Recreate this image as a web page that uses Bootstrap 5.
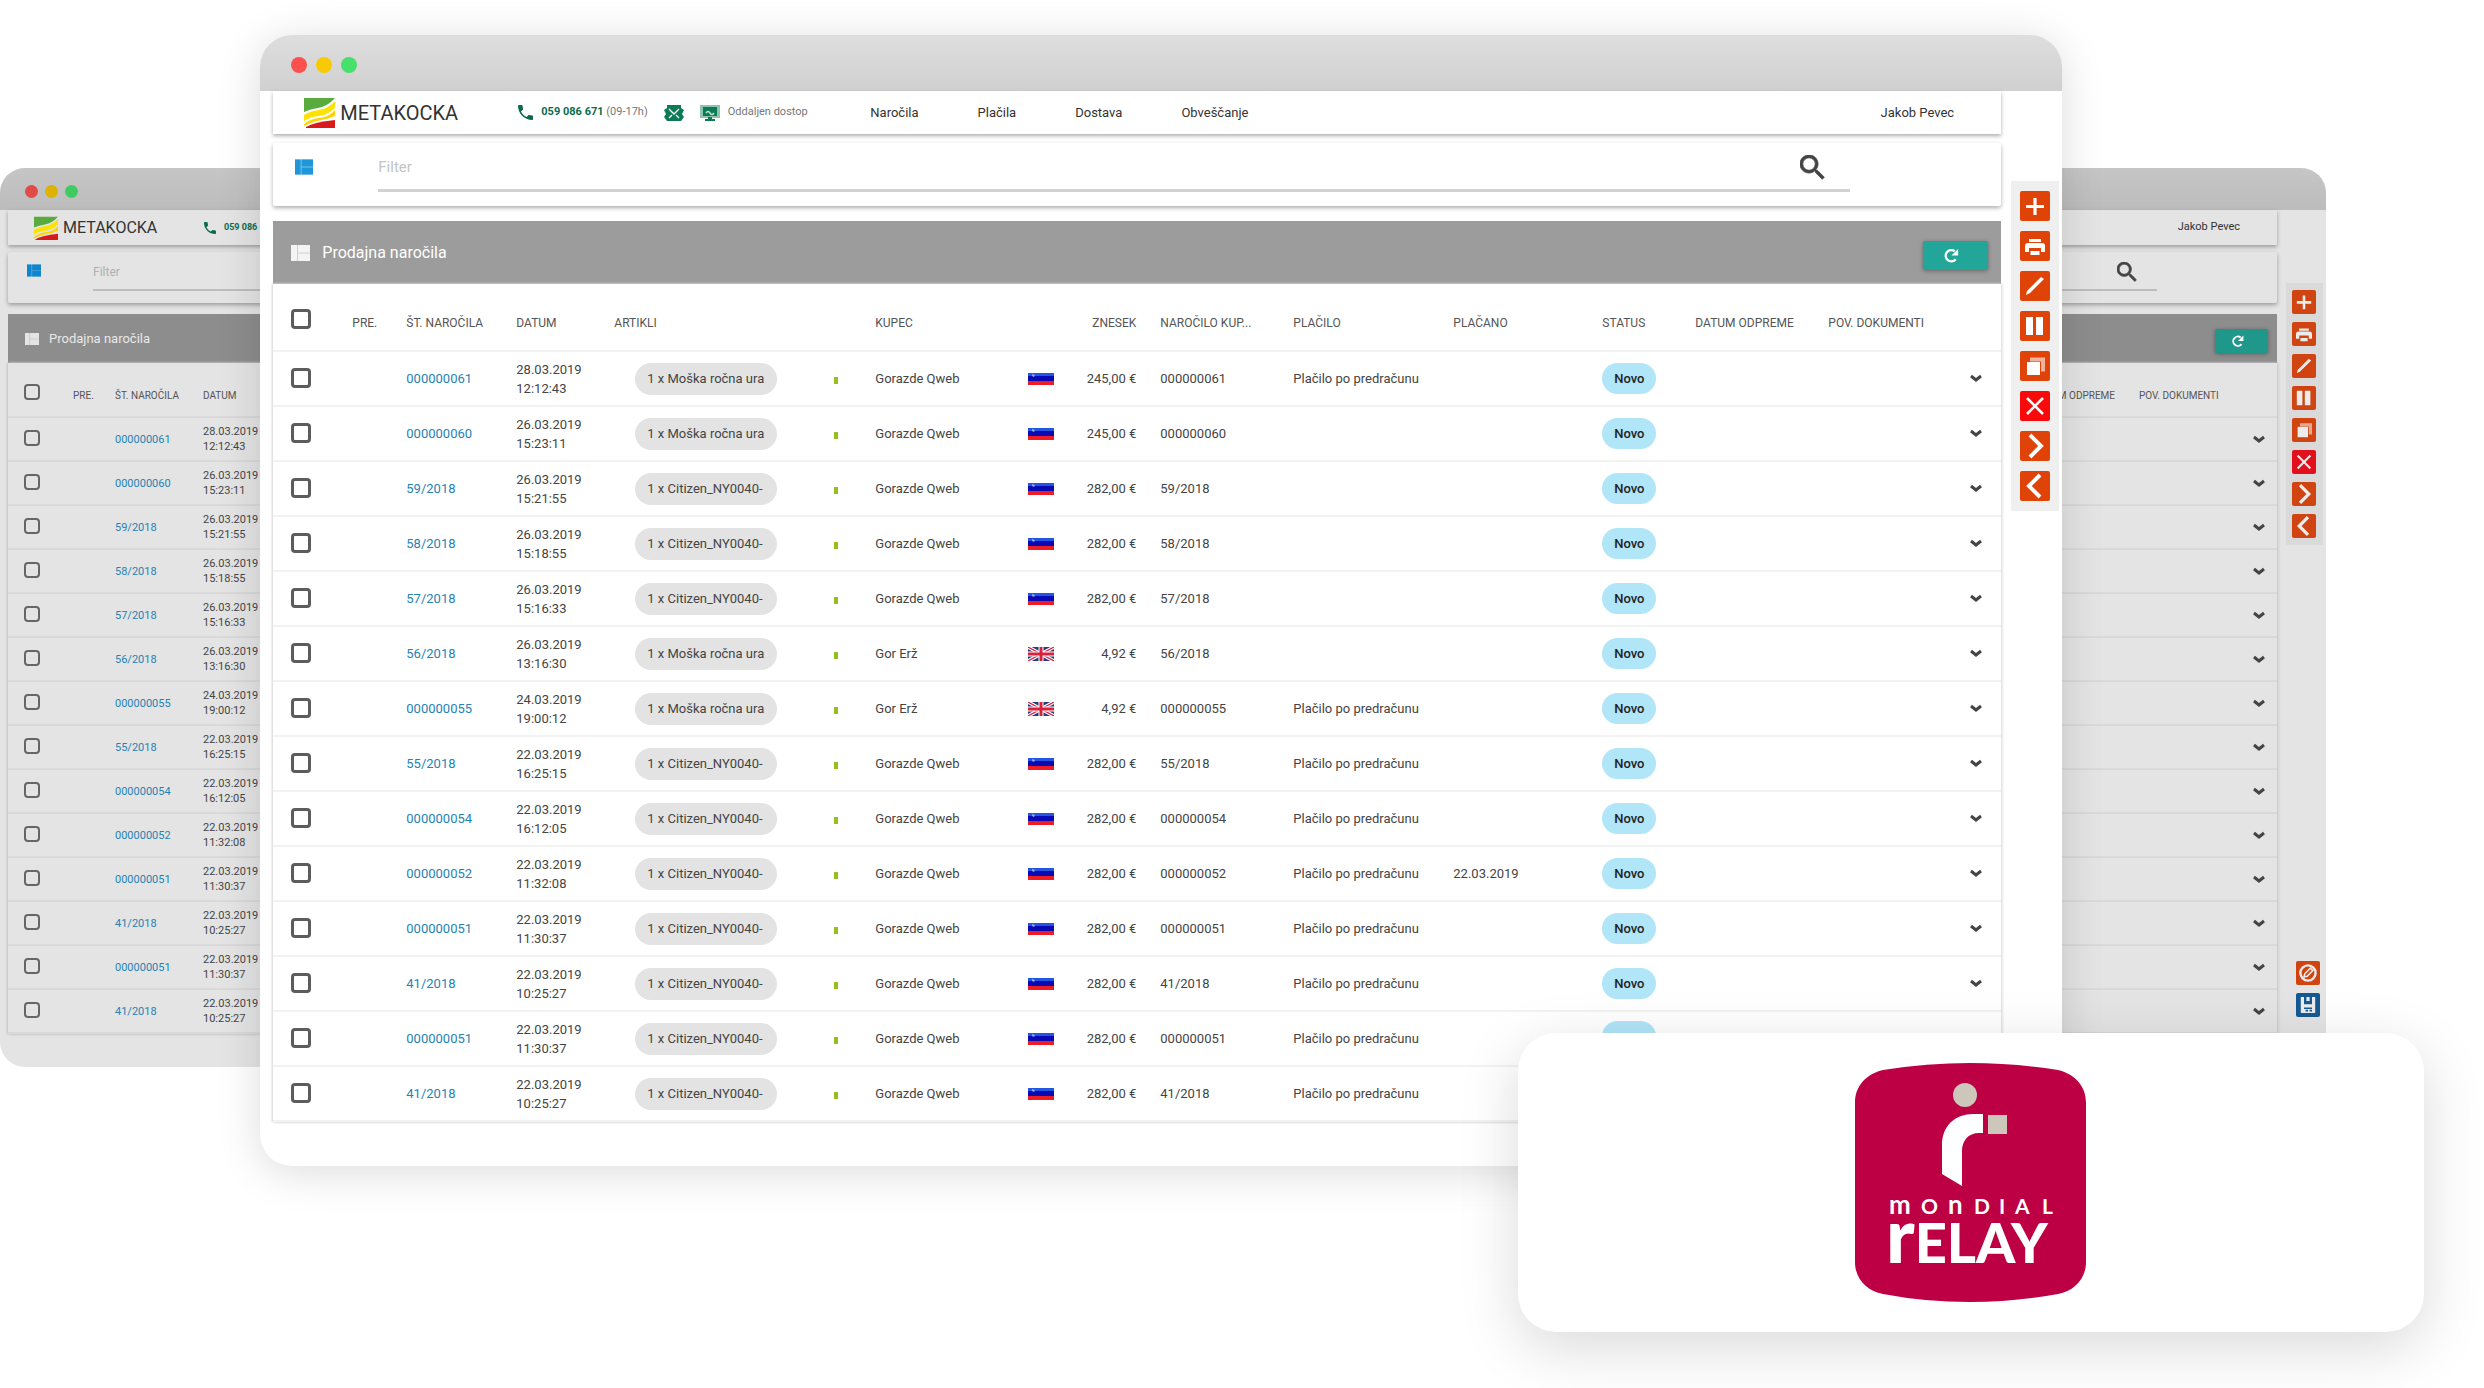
<!DOCTYPE html>
<html lang="sl">
<head>
<meta charset="utf-8">
<meta name="viewport" content="width=device-width, initial-scale=1">
<title>Metakocka – Prodajna naročila</title>
<link href="https://cdn.jsdelivr.net/npm/bootstrap@5.3.0/dist/css/bootstrap.min.css" rel="stylesheet">
<style>
body{font-family:Roboto,"Liberation Sans",sans-serif;background:#fff;color:#333}
.stage{overflow:hidden}
a{text-decoration:none}
svg{display:block;flex:none}
/* windows */
.win{--paper:#fff;--edge:#d6d6d6;--line:#f2f2f2;--head:#9c9c9c;--fs:13px;--fs-h:12px;position:absolute;background:var(--paper);border-radius:32px;overflow:hidden;font-size:var(--fs)}
.win-front{left:10.48%;width:72.54%;top:35px;box-shadow:0 6px 44px rgba(0,0,0,.14)}
.win-back{--paper:#e4e4e4;--edge:#c4c4c4;--line:#d9d9d9;--head:#8d8d8d;--fs:11px;--fs-h:10px;left:0;width:93.64%;top:168px;border-radius:25px}
.titlebar{height:56px;background:linear-gradient(#dedede,#d0d0d0);padding:3px 0 0 31px;gap:9px}
.win-back .titlebar{height:42px;background:linear-gradient(#c6c6c6,#bcbcbc);padding:5px 0 0 25px;gap:7px}
.dot{width:16px;height:16px;border-radius:50%}
.win-back .dot{width:13px;height:13px}
.dot-r{background:#fa514f}.dot-y{background:#f8c905}.dot-g{background:#47e06c}
.win-back .dot-r{background:#e04a47}.win-back .dot-y{background:#dcb203}.win-back .dot-g{background:#40cb62}
.pane{min-width:0;padding:0 0 44px 13px}
.win-back .pane{padding:0 0 33px 8px}
.sheet{background:var(--paper);box-shadow:0 2px 4px rgba(0,0,0,.32)}
/* top bar */
.topbar{height:43px;padding-left:31px}
.win-back .topbar{height:35px;padding-left:26px}
.brand{width:214px;gap:5px;font-size:20px;color:#333}
.win-back .brand{width:170px;font-size:16px}
.contact{width:352px;font-size:11px;color:#777}
.win-back .contact{font-size:9px}
.phone{color:#0b6b4c}
.topnav{gap:59px}
.topnav a,.user{color:#333}
.user{margin-right:47px}
.win-back .user{margin-right:37px}
/* filter */
.filter{height:63px;margin-top:9px;padding:0 151px 0 22px;gap:65px;border-radius:2px}
.win-back .filter{height:51px;margin-top:7px;padding:0 120px 0 19px;gap:52px}
.filter-ico{margin-top:16px}
.win-back .filter-ico{margin-top:12px}
.filter-line{height:49px;padding-top:2px;border-bottom:3px solid #d2d2d2;padding-right:25px}
.win-back .filter-line{height:39px;border-bottom:2px solid #bdbdbd;padding-right:20px}
.filter-line input{border:0;background:none;padding:0;outline:0;font-size:15px;min-width:0}
.win-back .filter-line input{font-size:12px}
.filter-line input::placeholder{color:#c4c4c4;opacity:1}
.win-back .filter-line input::placeholder{color:#b0b0b0}
.plain{border:0;background:none;padding:0;color:#444}
/* heading */
.heading{height:63px;margin-top:15px;padding:0 13px 0 18px;background:var(--head)}
.win-back .heading{height:49px;margin-top:11px;padding:0 9px 0 17px}
.heading h1{font-size:16px;font-weight:400;color:#fff;margin:0 0 0 12px}
.win-back .heading h1{font-size:13px;color:#e8e8e8;margin-left:10px}
.refresh{width:65px;height:29px;border:0;border-radius:2px;background:#22a699;color:#fff;padding:0 8px 0 0;box-shadow:0 1px 4px rgba(0,0,0,.35);margin-top:5px}
.win-back .refresh{width:53px;height:24px;background:#20978b;padding-right:7px}
/* table */
.orders{table-layout:fixed;width:100%;box-shadow:-1px 0 2px var(--edge),1px 0 3px var(--edge)}
.orders th{height:67px;padding:12px 0 0;font-size:var(--fs-h);font-weight:400;color:#555;vertical-align:middle;white-space:nowrap;border-bottom:2px solid var(--line)}
.orders td{height:55px;padding:0;vertical-align:middle;line-height:19px;white-space:nowrap;border-bottom:2px solid var(--line);color:#444}
.win-back .orders th{height:54px;padding-top:11px}
.win-back .orders td{height:44px;line-height:15px}
.orders .cb{padding:0 0 2px 18px}
.orders th.cb{padding-top:6px}
.win-back .orders .cb{padding-left:16px}
.cb input{appearance:none;display:block;width:20px;height:20px;border:3px solid #5c5c5c;border-radius:4px;margin:0}
.win-back .cb input{width:16px;height:16px;border-width:2px;border-color:#666}
.orders .num a{color:#2583b3}
.orders .ref{padding-left:24px}
.item{display:inline-flex;align-items:center;width:142px;height:32px;margin-left:21px;padding-left:12px;border-radius:16px;background:#e3e3e3;overflow:hidden}
.stock{display:block;width:4px;height:7px;margin:4px 0 0 13px;background:#93c01f}
.state{display:inline-flex;align-items:center;justify-content:center;width:54px;height:31px;border-radius:16px;background:#b1e5f8;color:#222;font-weight:500}
/* side tools */
.side{flex:none;width:61px}
.win-back .side{width:49px}
.tools{margin:90px 0 0 10px;padding:10px 9px;gap:10px;width:48px;background:#efefef}
.win-back .tools{margin:73px 0 0 9px;padding:7px 6px;gap:8px;width:37px;background:#dadada}
.tool{width:30px;height:30px;padding:0;border:0;border-radius:2px;background:#e04307;color:#fff}
.win-back .tool{width:24px;height:24px;background:#cf4410;color:#ececec}
.tool-del{background:#f80a0a}
.win-back .tool-del{background:#e0101c}
.win-back .tool-save{background:#165a94}
.extra{margin:auto 0 50px 19px;gap:8px}
/* carrier card */
.carrier{position:absolute;left:61.1%;width:36.48%;top:1033px;padding:30px 0;border-radius:38px;background:#fff;box-shadow:0 16px 60px rgba(0,0,0,.15)}
.carrier text{font-family:Lato,sans-serif;fill:#fff}
</style>
</head>
<body>
<svg width="0" height="0" class="position-absolute" aria-hidden="true">
  <symbol id="logo" viewBox="0 0 31 31"><path d="M0 1h31Q24 9 14 11 6 12 0 15z" fill="#58ab3c"/><path d="M0 18Q6 14 15 13 25 11 31 4v7Q24 18 14 19 6 20 0 24z" fill="#fbe200"/><path d="M0 27Q6 22 15 21 25 20 31 13v6Q22 23 13 24 6 26 0 29z" fill="#fbd500"/><path d="M2 30Q10 25 31 23v8H2z" fill="#d81a1a"/></symbol>
  <symbol id="phone" viewBox="3 3 18 18"><path fill="currentColor" d="M6.6 10.8c1.4 2.800 3.800 5.100 6.600 6.600l2.200-2.200c.3-.3.700-.4 1-.2 1.100.4 2.300.6 3.600.6.600 0 1 .4 1 1V20c0 .6-.4 1-1 1C10.600 21 3 13.400 3 4c0-.6.400-1 1-1h3.500c.6 0 1 .4 1 1 0 1.300.2 2.500.6 3.600.1.300 0 .7-.2 1z"/></symbol>
  <symbol id="mail" viewBox="0 0 20 16"><path fill="#0b7a55" d="M3 0h14v3l3 2-2 4 2 3-3 4H3l-3-4 2-3-2-4 3-2z"/><path d="M5 4l5 5 5-5M5 13l3-3M15 13l-3-3" fill="none" stroke="#fff" stroke-width="1.400"/></symbol>
  <symbol id="remote" viewBox="0 0 20 18"><path fill="#8cc5ad" d="M0 1h20v13H0z"/><path fill="#0b7a55" d="M3 3h14v9H3z"/><path fill="#0b7a55" d="M8 13h4v2h3v2H5v-2h3z"/><path d="M6 9q2-3 4 0t4 0" stroke="#bfe3d5" stroke-width="1.500" fill="none"/></symbol>
  <symbol id="grid" viewBox="0 0 19 16"><path fill="currentColor" d="M0 0h6v16H0zM7 0h12v7.500H7zM7 8.500h12V16H7z"/><path fill="currentColor" opacity=".6" d="M0 0h19v16H0z"/></symbol>
  <symbol id="search" viewBox="3 3 18 18"><path fill="currentColor" stroke="currentColor" stroke-width=".6" d="M15.500 14h-.8l-.3-.3A6.500 6.500 0 1 0 13.700 14.400l.3.300v.8l5 5 1.500-1.500zm-6 0a4.500 4.500 0 1 1 0-9 4.500 4.500 0 0 1 0 9z"/></symbol>
  <symbol id="reload" viewBox="0 0 18 18"><path d="M13.500 13A6 6 0 1 1 12.500 4.500" fill="none" stroke="currentColor" stroke-width="2.400"/><path fill="currentColor" d="M16 2v7H9z"/></symbol>
  <symbol id="chev" viewBox="0 0 14 9"><path d="M2 2l5 4 5-4" fill="none" stroke="#444" stroke-width="3"/></symbol>
  <symbol id="plus" viewBox="0 0 30 30"><path d="M15 7v17M6 15.500h18" stroke="currentColor" stroke-width="3.200"/></symbol>
  <symbol id="print" viewBox="0 0 30 30"><path fill="currentColor" d="M9 8h12v3H9zM8 12h14q3 0 3 3v6h-4v-4H9v4H5v-6q0-3 3-3zM10.500 20h9v4h-9z"/></symbol>
  <symbol id="pen" viewBox="0 0 30 30"><path fill="currentColor" d="M6 24l1-4L21 6l3 2-14 14z"/></symbol>
  <symbol id="cols" viewBox="0 0 30 30"><path fill="currentColor" d="M6 6h7v18H6zM16 6h7v18h-7z"/></symbol>
  <symbol id="copy" viewBox="0 0 30 30"><path fill="currentColor" d="M7 11h13v13H7z"/><path d="M10 8.500h13v12" fill="none" stroke="currentColor" stroke-width="4" opacity=".6"/></symbol>
  <symbol id="cross" viewBox="0 0 30 30"><path d="M7 7l16 16M23 7L7 23" stroke="currentColor" stroke-width="2.600"/></symbol>
  <symbol id="next" viewBox="0 0 30 30"><path d="M10 4l11 11-11 11" fill="none" stroke="currentColor" stroke-width="4"/></symbol>
  <symbol id="prev" viewBox="0 0 30 30"><path d="M20 4L9 15l11 11" fill="none" stroke="currentColor" stroke-width="4"/></symbol>
  <symbol id="edit" viewBox="0 0 30 30"><circle cx="15" cy="15" r="9.500" fill="none" stroke="currentColor" stroke-width="3"/><path d="M10 20l1-4 7-7 3 3-7 7z" fill="none" stroke="currentColor" stroke-width="2"/></symbol>
  <symbol id="save" viewBox="0 0 30 30"><path fill="currentColor" d="M6 5h4v9h10V5h4v20H6z"/><path fill="currentColor" d="M13 5h4v5h-4z"/><path d="M10 19h10M12 22h3M17 22h3" stroke="#165a94" stroke-width="2"/></symbol>
  <symbol id="si" viewBox="0 0 26 12"><path fill="#2355e0" d="M0 0h26v4H0z"/><path fill="#0a0ab4" d="M0 3h26v5H0z"/><path fill="#ee1c25" d="M0 8h26v4H0z"/><path fill="#8fa6ee" d="M4 1l3 1-1 2-2-1z"/></symbol>
  <symbol id="gb" viewBox="0 0 26 14"><path fill="#283a80" d="M0 0h26v14H0z"/><path d="M0 0l26 14M26 0L0 14" stroke="#fff" stroke-width="3.500"/><path d="M0 0l26 14M26 0L0 14" stroke="#d8213b" stroke-width="1.200"/><path d="M13 0v14M0 7h26" stroke="#fff" stroke-width="5"/><path d="M13 0v14M0 7h26" stroke="#d8213b" stroke-width="3"/></symbol>
</svg>

<main class="stage position-relative min-vh-100">

  <section class="win win-back" aria-label="Okno v ozadju">
    <div class="titlebar d-flex align-items-center"><span class="dot dot-r"></span><span class="dot dot-y"></span><span class="dot dot-g"></span></div>
    <div class="d-flex">
      <div class="pane flex-fill">
        <header class="sheet topbar d-flex align-items-center">
          <a href="#" class="brand d-flex align-items-center"><svg width="24" height="24"><use href="#logo"/></svg>METAKOCKA</a>
          <div class="contact d-flex align-items-center"><svg class="phone me-2" width="12" height="12"><use href="#phone"/></svg><b class="phone">059 086</b></div>
          <a href="#" class="user ms-auto">Jakob Pevec</a>
        </header>
        <form class="sheet filter d-flex align-items-start">
          <svg class="filter-ico" width="14" height="13" color="#0e86d0"><use href="#grid"/></svg>
          <div class="filter-line d-flex align-items-center flex-fill">
            <input type="text" class="flex-fill" placeholder="Filter" aria-label="Filter">
            <button type="button" class="plain" aria-label="Išči"><svg width="20" height="20"><use href="#search"/></svg></button>
          </div>
        </form>
        <div class="heading d-flex align-items-center">
          <svg width="14" height="12" color="#e4e4e4"><use href="#grid"/></svg>
          <h1>Prodajna naročila</h1>
          <button type="button" class="refresh ms-auto d-flex align-items-center justify-content-center" aria-label="Osveži"><svg width="14" height="14"><use href="#reload"/></svg></button>
        </div>
        <table class="orders">
          <colgroup><col style="width:65px"><col style="width:42px"><col style="width:88px"><col style="width:77px"><col><col style="width:106px"><col style="width:102px"><col style="width:36px"></colgroup>
          <thead><tr><th class="cb"><input type="checkbox" aria-label="Izberi vse"></th><th>PRE.</th><th>ŠT. NAROČILA</th><th>DATUM</th><th></th><th>DATUM ODPREME</th><th>POV. DOKUMENTI</th><th></th></tr></thead>
          <tbody id="rows-back"></tbody>
        </table>
      </div>
      <aside class="side d-flex flex-column">
        <div class="tools d-flex flex-column" data-tools="24"></div>
        <div class="extra d-flex flex-column">
          <button type="button" class="tool" aria-label="Uredi"><svg width="24" height="24"><use href="#edit"/></svg></button>
          <button type="button" class="tool tool-save" aria-label="Shrani"><svg width="24" height="24"><use href="#save"/></svg></button>
        </div>
      </aside>
    </div>
  </section>

  <section class="win win-front" aria-label="Prodajna naročila">
    <div class="titlebar d-flex align-items-center"><span class="dot dot-r"></span><span class="dot dot-y"></span><span class="dot dot-g"></span></div>
    <div class="d-flex">
      <div class="pane flex-fill">
        <header class="sheet topbar d-flex align-items-center">
          <a href="#" class="brand d-flex align-items-center"><svg width="31" height="31"><use href="#logo"/></svg>METAKOCKA</a>
          <div class="contact d-flex align-items-center">
            <svg class="phone" width="15" height="15"><use href="#phone"/></svg>
            <span class="ms-2"><b class="phone">059 086 671</b> (09-17h)</span>
            <svg class="ms-3" width="20" height="16"><use href="#mail"/></svg>
            <svg class="ms-3" width="20" height="18"><use href="#remote"/></svg>
            <span class="ms-2">Oddaljen dostop</span>
          </div>
          <nav class="topnav d-flex"><a href="#">Naročila</a><a href="#">Plačila</a><a href="#">Dostava</a><a href="#">Obveščanje</a></nav>
          <a href="#" class="user ms-auto">Jakob Pevec</a>
        </header>
        <form class="sheet filter d-flex align-items-start">
          <svg class="filter-ico" width="18" height="16" color="#1f97d8"><use href="#grid"/></svg>
          <div class="filter-line d-flex align-items-center flex-fill">
            <input type="text" class="flex-fill" placeholder="Filter" aria-label="Filter">
            <button type="button" class="plain" aria-label="Išči"><svg width="25" height="25"><use href="#search"/></svg></button>
          </div>
        </form>
        <div class="heading d-flex align-items-center">
          <svg width="19" height="16" color="#f4f4f4"><use href="#grid"/></svg>
          <h1>Prodajna naročila</h1>
          <button type="button" class="refresh ms-auto d-flex align-items-center justify-content-center" aria-label="Osveži"><svg width="17" height="17"><use href="#reload"/></svg></button>
        </div>
        <table class="orders">
          <colgroup><col style="width:79px"><col style="width:54px"><col style="width:110px"><col style="width:98px"><col style="width:207px"><col style="width:54px"><col style="width:133px"><col style="width:66px"><col style="width:62px"><col style="width:157px"><col style="width:160px"><col style="width:149px"><col style="width:93px"><col style="width:133px"><col style="width:122px"><col></colgroup>
          <thead><tr><th class="cb"><input type="checkbox" aria-label="Izberi vse"></th><th>PRE.</th><th>ŠT. NAROČILA</th><th>DATUM</th><th>ARTIKLI</th><th></th><th>KUPEC</th><th></th><th class="text-end">ZNESEK</th><th class="ref">NAROČILO KUP...</th><th>PLAČILO</th><th>PLAČANO</th><th>STATUS</th><th>DATUM ODPREME</th><th>POV. DOKUMENTI</th><th></th></tr></thead>
          <tbody id="rows-front"></tbody>
        </table>
      </div>
      <aside class="side">
        <div class="tools d-flex flex-column" data-tools="30"></div>
      </aside>
    </div>
  </section>

  <section class="carrier d-flex justify-content-center" aria-label="Mondial Relay">
    <svg width="231" height="239" viewBox="0 0 231 239" role="img" aria-label="Mondial Relay">
      <path fill="#bd0044" d="M0 40C0 22 12 11 28 7Q72 0 115 0T203 7C219 11 231 22 231 40V199C231 216 219 228 203 231Q160 239 115 239T28 231C12 228 0 216 0 199Z"/>
      <circle cx="110" cy="32" r="12" fill="#cdc6bb"/>
      <path fill="#cdc6bb" d="M133 52h19v19h-19z"/>
      <path fill="#fff" d="M128 51V70H124C113 70 107 78 107 88V123L87 111V82C87 62 101 51 118 51Z"/>
      <text y="151" font-size="21" font-weight="700" x="34 66 93 119 144 160 187"><tspan font-size="26">m</tspan>O<tspan font-size="26">n</tspan>DIAL</text>
      <text y="200" x="31" font-size="56" font-weight="900"><tspan font-size="76">r</tspan>ELAY</text>
    </svg>
  </section>
</main>

<script src="https://cdn.jsdelivr.net/npm/bootstrap@5.3.0/dist/js/bootstrap.bundle.min.js"></script>
<script>
const W = 'Moška ročna ura', C = 'Citizen_NY0040-', P = 'Plačilo po predračunu';
const orders = [
  ['000000061','28.03.2019','12:12:43',W,'si','245,00 €',P,''],
  ['000000060','26.03.2019','15:23:11',W,'si','245,00 €','',''],
  ['59/2018','26.03.2019','15:21:55',C,'si','282,00 €','',''],
  ['58/2018','26.03.2019','15:18:55',C,'si','282,00 €','',''],
  ['57/2018','26.03.2019','15:16:33',C,'si','282,00 €','',''],
  ['56/2018','26.03.2019','13:16:30',W,'gb','4,92 €','',''],
  ['000000055','24.03.2019','19:00:12',W,'gb','4,92 €',P,''],
  ['55/2018','22.03.2019','16:25:15',C,'si','282,00 €',P,''],
  ['000000054','22.03.2019','16:12:05',C,'si','282,00 €',P,''],
  ['000000052','22.03.2019','11:32:08',C,'si','282,00 €',P,'22.03.2019'],
  ['000000051','22.03.2019','11:30:37',C,'si','282,00 €',P,''],
  ['41/2018','22.03.2019','10:25:27',C,'si','282,00 €',P,''],
  ['000000051','22.03.2019','11:30:37',C,'si','282,00 €',P,''],
  ['41/2018','22.03.2019','10:25:27',C,'si','282,00 €',P,'']
];
const start = o => `<td class="cb"><input type="checkbox" aria-label="Izberi ${o[0]}"></td><td></td><td class="num"><a href="#">${o[0]}</a></td><td>${o[1]}<br>${o[2]}</td>`;
const end = w => `<td></td><td></td><td><button type="button" class="plain d-block mx-auto" aria-label="Več"><svg width="${w}" height="${w - 5}"><use href="#chev"/></svg></button></td>`;
document.getElementById('rows-front').innerHTML = orders.map((o, i) => `<tr>${start(o)}
  <td><span class="item">1 x ${o[3]}</span></td><td><span class="stock"></span></td>
  <td>${o[4] === 'gb' ? 'Gor Erž' : 'Gorazde Qweb'}</td>
  <td><svg class="mx-auto" width="26" height="${o[4] === 'gb' ? 14 : 12}"><use href="#${o[4]}"/></svg></td>
  <td class="text-end">${o[5]}</td><td class="ref">${o[0]}</td><td>${o[6]}</td><td>${o[7]}</td>
  <td>${i < 13 ? '<span class="state">' + (i < 12 ? 'Novo' : '') + '</span>' : ''}</td>${end(14)}</tr>`).join('');
document.getElementById('rows-back').innerHTML = orders.map(o => `<tr>${start(o)}<td></td>${end(14)}</tr>`).join('');
const tools = [['plus','Dodaj'],['print','Natisni'],['pen','Uredi'],['cols','Stolpci'],['copy','Kopiraj'],['cross','Izbriši'],['next','Naprej'],['prev','Nazaj']];
document.querySelectorAll('[data-tools]').forEach(el => {
  const s = el.dataset.tools;
  el.innerHTML = tools.map(t => `<button type="button" class="tool${t[0] === 'cross' ? ' tool-del' : ''}" aria-label="${t[1]}"><svg width="${s}" height="${s}"><use href="#${t[0]}"/></svg></button>`).join('');
});
</script>
</body>
</html>
